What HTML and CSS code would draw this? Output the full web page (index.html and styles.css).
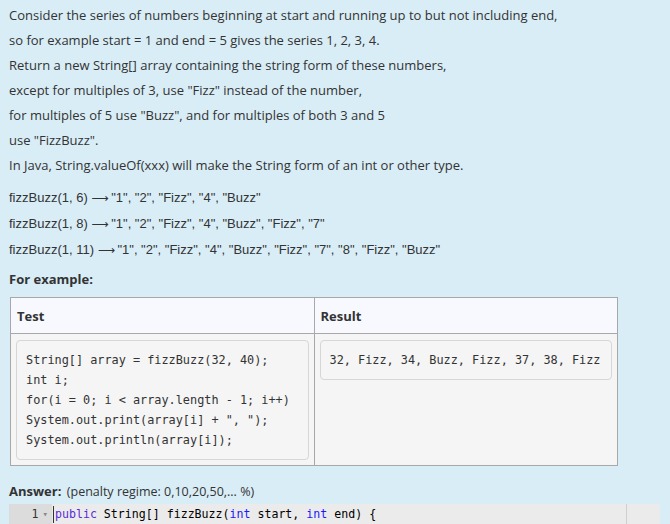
FILE: index.html
```html
<!DOCTYPE html>
<html>
<head>
<meta charset="utf-8">
<link rel="stylesheet" href="styles.css">
</head>
<body>
<div class="page">
  <div class="desc">
    <p>Consider the series of numbers beginning at start and running up to but not including end,</p>
    <p>so for example start = 1 and end = 5 gives the series 1, 2, 3, 4.</p>
    <p>Return a new String[] array containing the string form of these numbers,</p>
    <p>except for multiples of 3, use "Fizz" instead of the number,</p>
    <p>for multiples of 5 use "Buzz", and for multiples of both 3 and 5</p>
    <p>use "FizzBuzz".</p>
    <p>In Java, String.valueOf(xxx) will make the String form of an int or other type.</p>
  </div>
  <div class="examples">
    <p>fizzBuzz(1, 6) <span class="arrow">⟶</span> "1", "2", "Fizz", "4", "Buzz"</p>
    <p>fizzBuzz(1, 8) <span class="arrow">⟶</span> "1", "2", "Fizz", "4", "Buzz", "Fizz", "7"</p>
    <p>fizzBuzz(1, 11) <span class="arrow">⟶</span> "1", "2", "Fizz", "4", "Buzz", "Fizz", "7", "8", "Fizz", "Buzz"</p>
  </div>
  <h4 class="for-example">For example:</h4>
  <table class="tests">
    <thead>
      <tr><th>Test</th><th>Result</th></tr>
    </thead>
    <tbody>
      <tr>
        <td><pre class="box">String[] array = fizzBuzz(32, 40);
int i;
for(i = 0; i &lt; array.length - 1; i++)
System.out.print(array[i] + ", ");
System.out.println(array[i]);</pre></td>
        <td><pre class="box">32, Fizz, 34, Buzz, Fizz, 37, 38, Fizz</pre></td>
      </tr>
    </tbody>
  </table>
  <div class="answer"><b>Answer:</b> <span class="penalty">(penalty regime: 0,10,20,50,... %)</span></div>
  <div class="editor">
    <div class="gutter"><span class="ln">1</span><span class="fold">▾</span></div>
    <div class="code"><span class="cursor"></span><span class="kw">public</span> String[] fizzBuzz(<span class="ty">int</span> start, <span class="ty">int</span> end) {<span class="margin"></span></div>
  </div>
</div>
</body>
</html>
```
FILE: styles.css
```css
html, body {
  margin: 0;
  padding: 0;
  background: #d9edf7;
  overflow: hidden;
}
.page {
  padding: 3px 10px 0 9px;
  font-family: "Open Sans", sans-serif;
  font-size: 13px;
  color: #333;
}
.desc p, .examples p {
  margin: 0;
  line-height: 25px;
}
.examples {
  margin-top: 7px;
  font-family: "Liberation Sans", Arial, sans-serif;
}
.arrow {
  font-family: "DejaVu Sans", sans-serif;
  font-size: 12px;
  letter-spacing: -1px;
}
.for-example {
  margin: 4px 0 0 0;
  line-height: 25px;
  font-size: 13px;
  font-weight: 700;
}
.tests {
  margin: 5px 0 0 1px;
  width: 608px;
  border-collapse: collapse;
  border: 1px solid #a8a8a8;
}
.tests th {
  text-align: left;
  font-weight: 700;
  background: #f7f9ff;
  height: 35px;
  padding: 0 6px;
  border: 1px solid #a8a8a8;
  width: 50%;
}
.tests td {
  background: #f5f5f5;
  padding: 6px 5px 5px 5px;
  vertical-align: top;
  border: 1px solid #a8a8a8;
}
.box {
  margin: 0;
  padding: 9px 9px 9px 9px;
  border: 1px solid #d6d6d6;
  border-radius: 4px;
  background: #f5f5f5;
  font-family: "DejaVu Sans Mono", monospace;
  font-size: 11.85px;
  line-height: 20px;
  color: #333;
}
.answer {
  margin-top: 13px;
  line-height: 25px;
}
.answer b {
  font-weight: 700;
}
.penalty {
  font-size: 12.5px;
  margin-left: 2px;
}
.editor {
  margin-top: 0;
  width: 651px;
  display: flex;
  height: 20px;
  background: #ebebeb;
}
.gutter {
  width: 43px;
  background: #dcdcdc;
  display: flex;
  justify-content: flex-end;
  align-items: center;
  gap: 4px;
  padding-right: 4px;
  box-sizing: border-box;
  font-family: "DejaVu Sans Mono", monospace;
  font-size: 11.6px;
  color: #333;
}
.fold {
  font-size: 9px;
  color: #888;
}
.code {
  position: relative;
  flex: 1;
  padding-left: 3px;
  font-family: "DejaVu Sans Mono", monospace;
  font-size: 11.6px;
  line-height: 20px;
  color: #000;
  white-space: pre;
}
.cursor {
  position: absolute;
  left: 1px;
  top: 2px;
  width: 1px;
  height: 17px;
  background: #333;
}
.kw { color: #5a2bd8; }
.ty { color: #1a1aff; }
.margin {
  position: absolute;
  left: 574px;
  top: 0;
  width: 1px;
  height: 20px;
  background: #cfcfcf;
}
```
